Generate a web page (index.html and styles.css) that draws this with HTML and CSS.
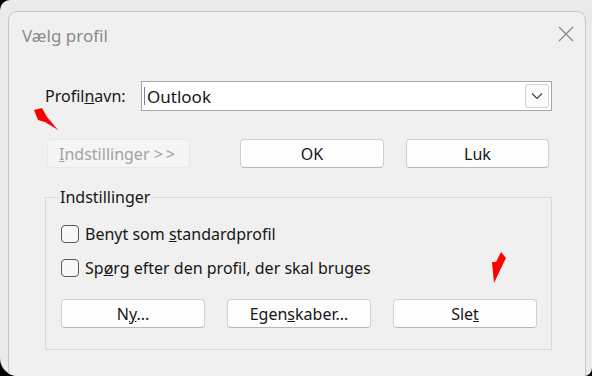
FILE: index.html
```html
<!DOCTYPE html>
<html lang="da">
<head>
<meta charset="utf-8">
<title>Vælg profil</title>
<link rel="stylesheet" href="styles.css">
</head>
<body>
<div class="screen">
  <div class="window">
    <div class="titlebar">
      <span class="title">Vælg profil</span>
      <svg class="close" width="16" height="16" viewBox="0 0 16 16"><path d="M1 1 L15 15 M15 1 L1 15" stroke="#8a8a8a" stroke-width="1.3" fill="none"/></svg>
    </div>
    <div class="content">
      <div class="row-profile">
        <label class="lbl">Profil<u>n</u>avn:</label>
        <div class="combo">
          <span class="caret"></span>
          <span class="combo-text">Outlook</span>
          <span class="combo-btn"><svg width="12" height="8" viewBox="0 0 12 8"><path d="M1 1.5 L6 6.5 L11 1.5" stroke="#444" stroke-width="1.2" fill="none"/></svg></span>
        </div>
      </div>
      <div class="row-buttons">
        <button class="btn disabled"><u>I</u>ndstillinger <span class="gt">&gt;&gt;</span></button>
        <button class="btn ok">OK</button>
        <button class="btn luk">Luk</button>
      </div>
      <fieldset class="group">
        <legend>Indstillinger</legend>
        <div class="check"><span class="box"></span><span>Benyt som <u>s</u>tandardprofil</span></div>
        <div class="check second"><span class="box"></span><span>Sp<u>ø</u>rg efter den profil, der skal bruges</span></div>
        <div class="group-buttons">
          <button class="btn">N<u>y</u>...</button>
          <button class="btn">Egen<u>s</u>kaber...</button>
          <button class="btn">Sle<u>t</u></button>
        </div>
      </fieldset>
    </div>
  </div>
  <svg class="arrow arrow1" width="30" height="30" viewBox="30 105 30 30"><polygon points="34,110 42,108 47,117 58,130 45,122 38,120" fill="#ff0000"/></svg>
  <svg class="arrow arrow2" width="20" height="36" viewBox="488 250 20 36"><polygon points="501,252 506,258 503,264 494,283 492,262 496,262" fill="#ff0000"/></svg>
</div>
</body>
</html>
```
FILE: styles.css
```css
html, body {
  margin: 0;
  padding: 0;
  background: #000;
}
.screen {
  position: relative;
  width: 592px;
  height: 376px;
  overflow: hidden;
  background: #eaeaea;
  border-radius: 10px 0 8px 18px;
  font-family: "Noto Sans", "Open Sans", sans-serif;
  color: #161616;
}
.window {
  position: relative;
  margin: 11px 0 0 8px;
  width: 578px;
  height: 400px;
  border: 1px solid #c6c6c6;
  border-bottom: none;
  border-radius: 9px 9px 0 0;
  background: #f0f0f0;
  box-sizing: border-box;
}
.titlebar {
  height: 46px;
  display: flex;
  align-items: center;
  justify-content: space-between;
  padding: 0 11px 0 13px;
}
.title {
  font-size: 17px;
  color: #8a8a8a;
}
.close {
  display: block;
  margin-top: -2px;
}
.content {
  padding-left: 36px;
}
.row-profile {
  display: flex;
  align-items: center;
  margin-top: 23px;
  height: 30px;
}
.lbl {
  width: 96px;
  font-size: 16px;
}
.combo {
  position: relative;
  width: 411px;
  height: 30px;
  box-sizing: border-box;
  border: 1px solid #a6a6a6;
  background: #fff;
  display: flex;
  align-items: center;
}
.caret {
  width: 1px;
  height: 18px;
  background: #6a8ab0;
  margin-left: 2px;
}
.combo-text {
  font-size: 17px;
  margin-left: 2px;
  flex: 1;
}
.combo-btn {
  width: 24px;
  height: 24px;
  box-sizing: border-box;
  border: 1px solid #d4d4d4;
  border-radius: 3px;
  background: #fcfcfc;
  margin-right: 2px;
  display: flex;
  align-items: center;
  justify-content: center;
}
.row-buttons {
  display: flex;
  margin-top: 28px;
  margin-left: 2px;
}
.btn {
  font-family: inherit;
  font-size: 16px;
  color: #161616;
  width: 144px;
  height: 29px;
  box-sizing: border-box;
  border: 1px solid #d0d0d0;
  border-bottom-color: #b8b8b8;
  border-radius: 4px;
  background: #fdfdfd;
  padding: 0;
  line-height: 1;
}
.btn.disabled {
  width: 143px;
  color: #a2a2a2;
  background: #f5f5f5;
  border-color: #e8e8e8;
}
.gt {
  letter-spacing: 3px;
}
.btn.ok {
  margin-left: 50px;
}
.btn.luk {
  margin-left: 22px;
  width: 143px;
}
.group {
  margin: 18px 0 0 0;
  width: 507px;
  box-sizing: border-box;
  border: 1px solid #d9d9d9;
  padding: 0 0 21px 15px;
  min-inline-size: 0;
}
.group legend {
  font-size: 16px;
  line-height: 22px;
  padding: 0 2px;
  margin-left: -3px;
}
.check {
  display: flex;
  align-items: center;
  font-size: 16px;
  height: 20px;
  margin-top: 16px;
}
.check.second {
  margin-top: 14px;
}
.box {
  width: 18px;
  height: 18px;
  box-sizing: border-box;
  border: 1.5px solid #5a5a5a;
  border-radius: 4px;
  background: #f7f7f7;
  margin-right: 6px;
}
.group-buttons {
  display: flex;
  gap: 22px;
  margin-top: 21px;
}
.group-buttons .btn {
  width: 144px;
}
.arrow {
  position: absolute;
}
.arrow1 {
  left: 30px;
  top: 105px;
}
.arrow2 {
  left: 488px;
  top: 250px;
}
```
